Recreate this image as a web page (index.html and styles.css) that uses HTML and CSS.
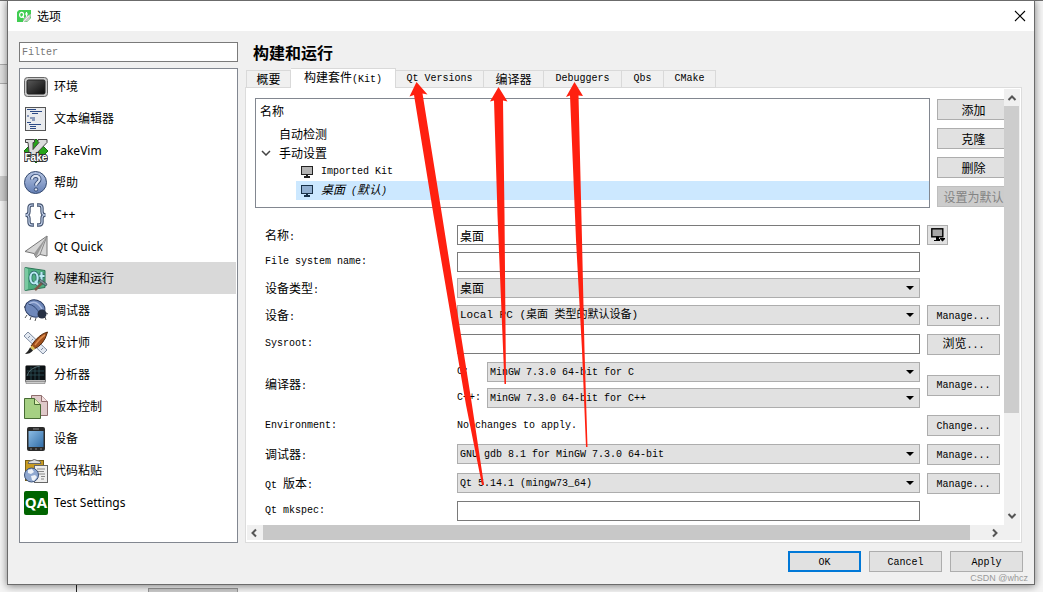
FILE: index.html
```html
<!DOCTYPE html>
<html lang="zh-CN">
<head>
<meta charset="utf-8">
<title>选项</title>
<link rel="stylesheet" href="styles.css">
</head>
<body>
<div class="behind behind-top"></div>
<div class="behind behind-band"></div>
<div class="behind behind-block"></div>
<div class="behind behind-line"></div>
<div class="behind behind-box"></div>

<main class="dialog">
  <header class="titlebar">
    <svg class="logo" width="16" height="14" viewBox="0 0 16 14"><path d="M3 1h12v8l-4 4H1V3z" fill="#41cd52"/><g fill="none" stroke="#fff" stroke-width="1.2"><ellipse cx="5.6" cy="5.8" rx="2" ry="2.5"/><path d="M6 7l2 2M10.500 3v4.500h1.500M9 5H12"/></g><path d="M7 12Q8 8 15 5q0 7-7 8z" fill="#c9c9c9"/><path d="M7 13l6-6" stroke="#eee"/></svg>
    <span class="title">选项</span>
    <button class="close" aria-label="关闭"><svg width="12" height="12" viewBox="0 0 12 12"><path d="M1 1l10 10M11 1L1 11" stroke="#000" stroke-width="1.100"/></svg></button>
  </header>

  <div class="content">
    <aside class="sidebar">
      <input class="filter" type="text" placeholder="Filter" aria-label="Filter">
      <nav class="categories">
        <a class="category" href="#env"><svg viewBox="0 0 24 24"><defs><linearGradient id="scr" x2="1" y2="1"><stop stop-color="#5a5a5a"/><stop offset=".5" stop-color="#333"/><stop offset="1" stop-color="#0b0b0b"/></linearGradient></defs><rect x=".5" y="2.500" width="23" height="19" rx="3" fill="#ccc" stroke="#666"/><rect x="3" y="5" width="18" height="14" rx="1.500" fill="url(#scr)" stroke="#222"/></svg>环境</a>
        <a class="category" href="#editor"><svg viewBox="0 0 24 24"><rect x="1.500" y=".5" width="20" height="23" fill="#e9ebee" stroke="#555"/><path d="M3 2.500h9M6 4.500h12M3 9h2M6 11h5M8 6.500h6M8 13h3M3 15.500h4M5 17.500h12M6 19.500h6M6 21.500h6" stroke="#2c4a86" stroke-width="1.200"/></svg>文本编辑器</a>
        <a class="category" href="#fakevim"><svg viewBox="0 0 24 24"><path d="M12 0l12 12-12 12L0 12z" fill="#28a51b" stroke="#186c12"/><path d="M1.500.5h9v3H9v7l6-7-1-1v-2h9v3L10 17H5.500L4 3.500H1.500z" fill="#dcdcdc" stroke="#444"/><text class="fake" x="0.500" y="22">Fake</text></svg>FakeVim</a>
        <a class="category" href="#help"><svg viewBox="0 0 24 24"><defs><linearGradient id="blue" x2="0" y2="1"><stop stop-color="#b5c4e2"/><stop offset="1" stop-color="#647fb5"/></linearGradient></defs><circle cx="11.500" cy="11.500" r="11" fill="url(#blue)" stroke="#34496f"/><path d="M8 8.500c0-5 8-4.500 7.500 0-.3 3-3.500 2.500-3.500 6" fill="none" stroke="#334a75" stroke-width="4"/><path d="M8 8.500c0-5 8-4.500 7.500 0-.3 3-3.500 2.500-3.500 6" fill="none" stroke="#dde4f1" stroke-width="2.200"/><circle cx="12" cy="18.500" r="1.700" fill="#dde4f1" stroke="#334a75"/></svg>帮助</a>
        <a class="category" href="#cpp"><svg viewBox="0 0 24 24"><g fill="none" stroke="#43536f" stroke-width="3.400"><path d="M10 2H8Q5 2 5 5v3.500Q5 12 1.500 12 5 12 5 15.500V19q0 3 3 3h2M13 2h2q3 0 3 3v3.500q0 3.500 3.500 3.500-3.500 0-3.500 3.500V19q0 3-3 3h-2"/></g><g fill="none" stroke="#c4d2ec" stroke-width="1.200"><path d="M9.500 2H8Q5 2 5 5v3.500Q5 12 1.500 12 5 12 5 15.500V19q0 3 3 3h1.500M13.500 2H15q3 0 3 3v3.500q0 3.500 3.500 3.500-3.500 0-3.500 3.500V19q0 3-3 3h-1.500"/></g></svg>C++</a>
        <a class="category" href="#quick"><svg viewBox="0 0 24 24"><path d="M23 1v20l-7-1.500-4 3-2-4-9-2z" fill="#d6d6d6" stroke="#777"/><path d="M23 1L10 18.500l2 4z" fill="#999"/><path d="M23 1l-7 18.500" stroke="#888"/></svg>Qt Quick</a>
        <a class="category selected" href="#build" aria-current="page"><svg viewBox="0 0 24 24"><path d="M1 .5l20 3v17l-20 3z" fill="#4eae80" stroke="#2d7657"/><path d="M1 .5l3 1.500v20L1 23.500z" fill="#79c9a1"/><g fill="none" stroke="#265f62" stroke-width="3.600"><ellipse cx="10" cy="11" rx="3.600" ry="5.500"/><path d="M11 14l3 4M17.500 5v9q0 2 2 2M15.500 9h5"/></g><g fill="none" stroke="#b9e9f2" stroke-width="2.200"><ellipse cx="10" cy="11" rx="3.600" ry="5.500"/><path d="M11 14l3 4M17.500 5v9q0 2 2 2M15.500 9h5"/></g><path d="M11 23l8-8" stroke="#7d5a49" stroke-width="2.500"/><path d="M16 12l7 5-1 2-7-5z" fill="#7a9199" stroke="#334b55" stroke-width=".7"/></svg>构建和运行</a>
        <a class="category" href="#debugger"><svg viewBox="0 0 24 24"><path d="M3 16l-2 3M7 18l-1 3M12 19l-1 3M21 18l1 3M22 14l2 1M1 9L0 7" stroke="#555"/><ellipse cx="11" cy="9.500" rx="10" ry="8.500" transform="rotate(15 11 9.500)" fill="#6f88ba" stroke="#2c3d63"/><path d="M4 6q7-7 14 4" fill="none" stroke="#aabbe0" stroke-width="1.500"/><path d="M4 5q8 1 12 11" fill="none" stroke="#334a78"/><circle cx="18" cy="15" r="4.500" fill="#263044"/></svg>调试器</a>
        <a class="category" href="#designer"><svg viewBox="0 0 24 24"><path d="M4 1l19 18-4 4L0 5z" fill="#e3e9f2" stroke="#7f8ca0"/><path d="M6 5l-2 2M9 8l-1.500 1.500M12 11l-2 2M16 14l-1.500 1.500M19 17l-2 2" stroke="#7f8ca0"/><path d="M23.500 1Q20 14 10 18l-3-3Q15 3 23.500 1z" fill="#a1501c" stroke="#542707"/><path d="M21 4Q16 7 11 14" stroke="#dc8a4a" stroke-width="1.500" fill="none"/><path d="M8 14.500l3 3-2 2-3-3z" fill="#d9bd55"/><path d="M6 16.500l3 3Q6 23 1 23q3-2 5-6.500z" fill="#222"/></svg>设计师</a>
        <a class="category" href="#analyzer"><svg viewBox="0 0 24 24"><rect x="1.500" y="2.500" width="20" height="17" rx="1.500" fill="#bbb" stroke="#777"/><rect x="2" y="3" width="19" height="14" fill="#0b1114"/><path d="M3 8h17M3 12h17M7 4v13M11 4v13M15 4v13" stroke="#2e5258" stroke-width=".8"/><path d="M3 13Q5 5 16 3" stroke="#526b70" fill="none"/><path d="M2 18.500h19v2H2z" fill="#ccc" stroke="#777" stroke-width=".6"/></svg>分析器</a>
        <a class="category" href="#vcs"><svg viewBox="0 0 24 24"><path d="M7.500.5h10l6 6v14h-16z" fill="#dfc9c9" stroke="#8e6d6d"/><path d="M17.500.5v6h6" fill="#f5e2e2" stroke="#8e6d6d"/><path d="M.5 3.500h10l6 6v14H.5z" fill="#a6d083" stroke="#476b34"/><path d="M10.500 3.500v6h6" fill="#def0b5" stroke="#476b34"/></svg>版本控制</a>
        <a class="category" href="#devices"><svg viewBox="0 0 24 24"><defs><linearGradient id="dev" x2="1" y2="1"><stop stop-color="#8cbce5"/><stop offset="1" stop-color="#316da7"/></linearGradient></defs><rect x="3" y="0" width="18" height="24" rx="2" fill="#2b2b2b"/><rect x="4.500" y="4" width="15" height="16" fill="url(#dev)"/><path d="M9 2h6M6 22h2M11 22h2M16 22h2" stroke="#888"/></svg>设备</a>
        <a class="category" href="#paste"><svg viewBox="0 0 24 24"><rect x="1.500" y="1.500" width="18" height="20" fill="#c99c22" stroke="#765d15"/><path d="M4 4.500q0-3 4-3 2-2 5 0 4 0 4 3z" fill="#ddd" stroke="#666"/><rect x="10.500" y="6.500" width="13" height="17" fill="#eee" stroke="#666"/><path d="M13 10h8M14 12.500h6M13 15h8M17 17.500h4M17 20h3" stroke="#888"/><circle cx="7.500" cy="16" r="7" fill="#8fa8d0" stroke="#3c5278"/><path d="M4 11l4-1 2 3-3 2-3-1zM7 17l4-1 2 2-3 4-2-1zM2 16l3 3" fill="#eef2f8"/></svg>代码粘贴</a>
        <a class="category" href="#test"><span class="qa">QA</span>Test Settings</a>
      </nav>
    </aside>

    <section class="panel">
      <h1 class="heading">构建和运行</h1>
      <div class="tabs" role="tablist">
        <button class="tab tab-general" role="tab">概要</button>
        <button class="tab tab-kits active" role="tab" aria-selected="true">构建套件<span class="latin">(Kit)</span></button>
        <button class="tab tab-versions latin" role="tab">Qt Versions</button>
        <button class="tab tab-compilers" role="tab">编译器</button>
        <button class="tab tab-debuggers latin" role="tab">Debuggers</button>
        <button class="tab tab-qbs latin" role="tab">Qbs</button>
        <button class="tab tab-cmake latin" role="tab">CMake</button>
      </div>

      <div class="page">
        <div class="viewport">
          <div class="kits">
            <div class="tree">
              <div class="tree-head">名称</div>
              <div class="tree-row group">自动检测</div>
              <div class="tree-row group"><svg class="chevron" width="10" height="6" viewBox="0 0 10 6"><path d="M1 1l4 4 4-4" fill="none" stroke="#444" stroke-width="1.500"/></svg>手动设置</div>
              <div class="tree-row kit"><svg width="12" height="12" viewBox="0 0 12 12"><rect x=".5" y=".5" width="11" height="8" fill="#b4b4b4" stroke="#222"/><path d="M5 9h2v1h2v2H3v-2h2z" fill="#222"/></svg><span class="latin">Imported Kit</span></div>
              <div class="tree-row kit current"><svg width="12" height="12" viewBox="0 0 12 12"><rect x=".5" y=".5" width="11" height="8" fill="#91afd0" stroke="#183047"/><path d="M5 9h2v1h2v2H3v-2h2z" fill="#183047"/></svg><em>桌面<span class="latin"> (</span>默认<span class="latin">)</span></em></div>
            </div>
            <div class="kit-actions">
              <button class="btn">添加</button>
              <button class="btn">克隆</button>
              <button class="btn">删除</button>
              <button class="btn" disabled>设置为默认</button>
            </div>
          </div>

          <form class="form">
            <label for="name">名称<span class="latin">:</span></label>
            <input class="field" id="name" type="text" value="桌面">
            <button class="btn icon-btn" type="button" aria-label="图标"><svg width="14" height="14" viewBox="0 0 14 14"><rect x=".8" y=".8" width="11" height="8" fill="#a5a5a5" stroke="#000" stroke-width="1.400"/><path d="M5 9h3v2h1v2H3v-1h2zM9 10h5v1l-2.500 2.500L9 11z"/></svg></button>

            <label class="latin" for="fsn">File system name:</label>
            <input class="field" id="fsn" type="text">
            <span></span>

            <label for="type">设备类型<span class="latin">:</span></label>
            <select class="field" id="type"><option>桌面</option></select>
            <span></span>

            <label for="device">设备<span class="latin">:</span></label>
            <select class="field mixed" id="device"><option>Local PC (桌面 类型的默认设备)</option></select>
            <button class="btn latin" type="button">Manage...</button>

            <label class="latin" for="sysroot">Sysroot:</label>
            <input class="field" id="sysroot" type="text">
            <button class="btn" type="button">浏览<span class="latin">...</span></button>

            <span class="group-label">编译器<span class="latin">:</span></span>
            <div class="compilers">
              <label class="latin" for="cc">C:</label>
              <select class="field latin" id="cc"><option>MinGW 7.3.0 64-bit for C</option></select>
              <label class="latin" for="cxx">C++:</label>
              <select class="field latin" id="cxx"><option>MinGW 7.3.0 64-bit for C++</option></select>
            </div>
            <button class="btn latin middle" type="button">Manage...</button>

            <span class="group-label latin">Environment:</span>
            <span class="group-label latin">No changes to apply.</span>
            <button class="btn latin" type="button">Change...</button>

            <label for="gdb">调试器<span class="latin">:</span></label>
            <select class="field latin" id="gdb"><option>GNU gdb 8.1 for MinGW 7.3.0 64-bit</option></select>
            <button class="btn latin" type="button">Manage...</button>

            <label for="qt"><span class="latin">Qt </span>版本<span class="latin">:</span></label>
            <select class="field latin" id="qt"><option>Qt 5.14.1 (mingw73_64)</option></select>
            <button class="btn latin" type="button">Manage...</button>

            <label class="latin" for="mkspec">Qt mkspec:</label>
            <input class="field" id="mkspec" type="text">
            <span></span>
          </form>
        </div>

        <div class="vbar">
          <svg width="16" height="17" viewBox="0 0 16 17"><path d="M4.500 11L8 7.500l3.500 3.500" fill="none" stroke="#555" stroke-width="2"/></svg>
          <div class="vthumb"></div>
          <svg width="16" height="17" viewBox="0 0 16 17"><path d="M4.500 7L8 10.500 11.500 7" fill="none" stroke="#555" stroke-width="2"/></svg>
        </div>
        <div class="hbar">
          <svg width="16" height="16" viewBox="0 0 16 16"><path d="M9 4.500L5.500 8 9 11.500" fill="none" stroke="#555" stroke-width="2"/></svg>
          <div class="hthumb"></div>
          <svg width="16" height="16" viewBox="0 0 16 16"><path d="M6 4.500L9.500 8 6 11.500" fill="none" stroke="#555" stroke-width="2"/></svg>
        </div>
      </div>
    </section>
  </div>

  <footer class="footer">
    <button class="btn latin default">OK</button>
    <button class="btn latin">Cancel</button>
    <button class="btn latin">Apply</button>
  </footer>
</main>

<svg class="arrows" width="1043" height="592" viewBox="0 0 1043 592">
  <g fill="#ff2010">
    <path d="M416.500 82L427.500 94.500 422.500 93.500 442 215 472 405 484 485 482 485 466 405 433.500 215 414 95 409.500 96.500z"/>
    <path d="M498.500 87L507.500 101.500 503 100.500 504.500 215 506 384 504.500 384 497.500 215 494 100.500 490 101.500z"/>
    <path d="M574.500 82L583 96 578.500 95.500 582 240 584.500 350 587.500 447 586 447 582 350 576 240 570 95.500 566 97z"/>
  </g>
</svg>
<div class="watermark">CSDN @whcz</div>
</body>
</html>
```

FILE: styles.css
```css
* {
  box-sizing: border-box;
}

body {
  margin: 0;
  min-height: 100vh;
  padding: 0 8px 7px 7px;
  position: relative;
  overflow: hidden;
  background: #f5f5f5;
  color: #000;
  font-family: "Noto Sans CJK SC", sans-serif;
  font-size: 12px;
  line-height: 16px;
}

button,
input,
select {
  margin: 0;
  color: inherit;
  font-family: inherit;
  font-size: 12px;
  line-height: 16px;
}

.latin {
  font-family: "Liberation Mono", "Noto Sans CJK SC", monospace;
  font-size: 10px;
  white-space: pre;
}

/* Parts of the window underneath that show round the dialog */
.behind {
  position: absolute;
}

.behind-top {
  inset: 0 0 auto;
  height: 1px;
  background: #707070;
}

.behind-band {
  left: 0;
  top: 64px;
  width: 8px;
  height: 20px;
  border: solid #adadad;
  border-width: 1px 0;
  background: #e1e1e1;
}

.behind-block {
  left: 0;
  top: 176px;
  width: 8px;
  height: 25px;
  background: #cdcdcd;
}

.behind-line {
  left: 76px;
  bottom: 0;
  width: 1px;
  height: 8px;
  background: #222;
}

.behind-box {
  left: 148px;
  bottom: 0;
  width: 90px;
  height: 4px;
  border: 1px solid #999;
  border-bottom: 0;
  background: #ccc;
}

.dialog {
  position: relative;
  display: flex;
  flex-direction: column;
  min-height: calc(100vh - 7px);
  border: 1px solid #6b6b6b;
  background: #f0f0f0;
  box-shadow: 0 1px 8px rgba(0, 0, 0, 0.5);
}

.titlebar {
  display: flex;
  align-items: center;
  height: 30px;
  padding: 0 8px;
  background: #fff;
}

.title {
  margin-left: 5px;
}

.close {
  display: flex;
  margin-left: auto;
  padding: 0;
  border: 0;
  background: none;
}

.content {
  flex: 1;
  display: flex;
  gap: 7px;
  padding: 11px 12px 0 11px;
}

.sidebar {
  flex: none;
  display: flex;
  flex-direction: column;
  gap: 6px;
  width: 219px;
}

.filter {
  height: 20px;
  padding: 0 2px;
  border: 1px solid #7a7a7a;
  background: #fff;
  font-family: "Liberation Mono", monospace;
  font-size: 10px;
}

.filter::placeholder {
  color: #777;
}

.categories {
  flex: 1;
  padding: 1px;
  border: 1px solid #828790;
  background: #fff;
}

.category {
  display: flex;
  align-items: center;
  gap: 6px;
  height: 32px;
  padding: 1px 3px 0;
  color: #000;
  font-family: "Noto Sans", "Noto Sans CJK SC", sans-serif;
  text-decoration: none;
}

.category svg,
.qa {
  flex: none;
  width: 24px;
  height: 24px;
}

.category.selected {
  background: #d9d9d9;
}

.fake {
  fill: #fff;
  stroke: #333;
  stroke-width: 2px;
  paint-order: stroke;
  font-family: "Liberation Sans", sans-serif;
  font-size: 10px;
  font-weight: 700;
}

.qa {
  border-radius: 2px;
  background: #006400;
  color: #fff;
  font-family: "Open Sans", sans-serif;
  font-size: 15px;
  font-weight: 700;
  line-height: 22px;
  text-align: center;
}

.panel {
  flex: 1;
  min-width: 0;
  display: flex;
  flex-direction: column;
}

.heading {
  margin: 0 0 6px;
  padding-left: 8px;
  font-size: 16px;
  font-weight: 700;
  line-height: 20px;
}

.tabs {
  position: relative;
  display: flex;
  align-items: flex-end;
  height: 20px;
  padding-left: 1px;
  margin-bottom: -1px;
}

.tab {
  height: 18px;
  padding: 0;
  border: 1px solid #d9d9d9;
  border-left: 0;
  background: #f0f0f0;
}

.tab.latin {
  font-family: "Liberation Mono", monospace;
  font-size: 10px;
}

.tab-general { width: 45px; border-left: 1px solid #d9d9d9; }
.tab-kits { width: 105px; }
.tab-versions { width: 88px; }
.tab-compilers { width: 60px; }
.tab-debuggers { width: 78px; }
.tab-qbs { width: 42px; }
.tab-cmake { width: 52px; }

.tab.active {
  height: 20px;
  border-bottom: 0;
  background: #fff;
}

.page {
  flex: 1;
  display: grid;
  grid-template-columns: minmax(0, 1fr) 16px;
  grid-template-rows: 1fr 15px;
  padding: 1px 1px 2px;
  border: 1px solid #dcdcdc;
  background: #fff;
}

.viewport {
  overflow: hidden;
  padding: 9px 1px 2px 8px;
}

.kits {
  display: flex;
  gap: 7px;
}

.tree {
  flex: 1;
  height: 110px;
  border: 1px solid #828790;
}

.tree-head {
  height: 25px;
  padding: 4px;
}

.tree-row {
  display: flex;
  align-items: center;
  height: 19px;
}

.group {
  position: relative;
  padding-left: 23px;
}

.chevron {
  position: absolute;
  left: 5px;
}

.kit {
  gap: 8px;
  margin-left: 40px;
  padding-left: 5px;
}

.current {
  background: #cce8ff;
}

.kit-actions {
  display: flex;
  flex-direction: column;
  gap: 8px;
  margin-right: -7px;
  padding-top: 1px;
}

.btn {
  width: 73px;
  height: 21px;
  padding: 0;
  border: 1px solid #adadad;
  background: #e1e1e1;
  text-align: center;
  white-space: nowrap;
}

.btn.latin {
  padding-top: 2px;
  font-family: "Liberation Mono", monospace;
  font-size: 10px;
}

.btn:disabled {
  border-color: #bfbfbf;
  background: #ccc;
  color: #838383;
}

.btn.default {
  border: 2px solid #0078d7;
}

.form {
  display: grid;
  grid-template-columns: 185px minmax(0, 1fr) 73px;
  grid-template-rows: 20px 19px 20px 22px 21px 46px 22px 22px 21px 20px;
  gap: 7px;
  padding: 17px 3px 0 10px;
}

.form label,
.group-label {
  align-self: start;
  line-height: 20px;
}

.group-label.latin {
  line-height: 22px;
}

.field {
  width: 100%;
  height: 20px;
  padding: 0 2px;
  border: 1px solid #7a7a7a;
  border-radius: 0;
  background: #fff;
}

select.field {
  appearance: none;
  border-color: #adadad;
  background: #e1e1e1 url("data:image/svg+xml,%3Csvg xmlns='http://www.w3.org/2000/svg' width='8' height='4'%3E%3Cpath d='M0 0h8L4 4z'/%3E%3C/svg%3E") no-repeat right 5px center;
}

select.field.latin {
  padding-top: 1px;
  font-family: "Liberation Mono", monospace;
  font-size: 10px;
}

select.field.mixed {
  font-family: "Liberation Mono", "Noto Sans CJK SC", monospace;
  font-size: 11px;
}

.icon-btn {
  display: flex;
  align-items: center;
  justify-content: center;
  width: 21px;
  height: 20px;
}

.compilers {
  display: grid;
  grid-template-columns: 30px minmax(0, 1fr);
  grid-auto-rows: 20px;
  row-gap: 6px;
}

.form .group-label:has(+ .compilers),
.middle {
  align-self: center;
}

.vbar {
  display: flex;
  flex-direction: column;
  padding-bottom: 1px;
  background: #f0f0f0;
}

.vthumb {
  flex: 1;
  width: 15px;
  margin-bottom: 94px;
  background: #cdcdcd;
}

.hbar {
  grid-column: 1 / -1;
  display: flex;
  align-items: center;
  padding-right: 17px;
  background: #f0f0f0;
}

.hthumb {
  flex: 1;
  height: 15px;
  margin-right: 17px;
  background: #c8c8c8;
}

.footer {
  display: flex;
  justify-content: flex-end;
  gap: 8px;
  padding: 8px 11px 12px;
}

/* Annotations drawn over the dialog */
.arrows {
  position: absolute;
  left: 0;
  top: 0;
  pointer-events: none;
}

.watermark {
  position: absolute;
  right: 15px;
  bottom: 8px;
  color: #999;
  font-family: "Liberation Sans", sans-serif;
  font-size: 9px;
  line-height: 12px;
}
```
